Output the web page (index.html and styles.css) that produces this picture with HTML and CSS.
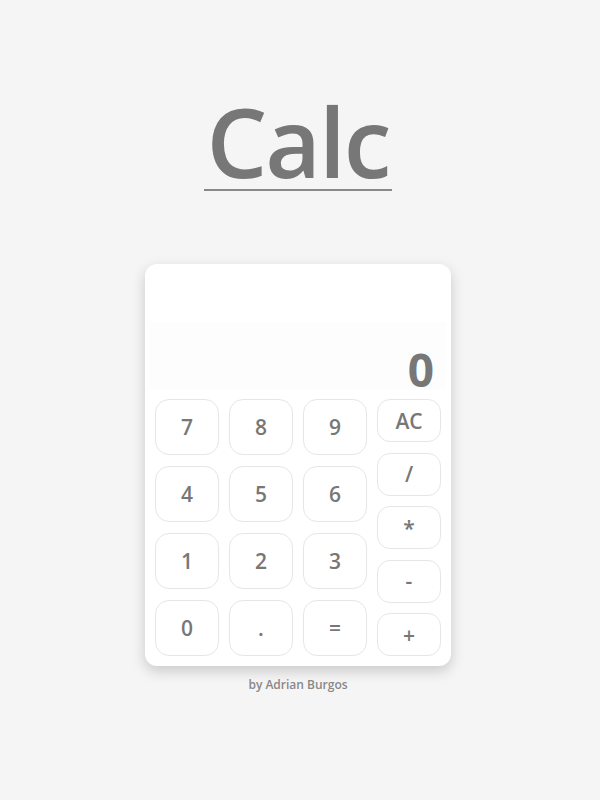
FILE: index.html
```html
<!DOCTYPE html>
<html lang="en">
<head>
<meta charset="utf-8">
<title>Calc</title>
<link rel="stylesheet" href="styles.css">
</head>
<body>
<main class="page">
  <h1 class="title">Calc</h1>
  <section class="calc">
    <div class="display"><div class="screen"><span class="value">0</span></div></div>
    <div class="pad">
      <div class="digits">
        <button class="key">7</button>
        <button class="key">8</button>
        <button class="key">9</button>
        <button class="key">4</button>
        <button class="key">5</button>
        <button class="key">6</button>
        <button class="key">1</button>
        <button class="key">2</button>
        <button class="key">3</button>
        <button class="key">0</button>
        <button class="key">.</button>
        <button class="key">=</button>
      </div>
      <div class="ops">
        <button class="key op">AC</button>
        <button class="key op">/</button>
        <button class="key op">*</button>
        <button class="key op">-</button>
        <button class="key op">+</button>
      </div>
    </div>
  </section>
  <p class="credit">by Adrian Burgos</p>
</main>
</body>
</html>
```

FILE: styles.css
```css
html, body {
  margin: 0;
  padding: 0;
  background: #f5f5f5;
}
body {
  font-family: "Open Sans", "Noto Sans", sans-serif;
  color: #777;
}
.page {
  display: flex;
  flex-direction: column;
  align-items: center;
  padding-right: 4px;
}
.title {
  margin: 93px 0 0;
  font-size: 96px;
  line-height: 96px;
  font-weight: 600;
  color: #777;
  border-bottom: 2px solid #888;
  padding: 0 3px;
  letter-spacing: -2px;
}
.calc {
  margin-top: 73px;
  width: 306px;
  box-sizing: border-box;
  padding: 10px;
  background: #fff;
  border-radius: 12px;
  box-shadow: 0 5px 14px rgba(0, 0, 0, 0.18);
}
.display {
  height: 115px;
  display: flex;
  flex-direction: column;
  justify-content: flex-end;
  margin-bottom: 10px;
}
.screen {
  height: 67px;
  margin: 0 -5px 0 -5px;
  padding-right: 12px;
  background: #fdfdfd;
  display: flex;
  justify-content: flex-end;
  align-items: flex-end;
  font-size: 46px;
  font-weight: 700;
  line-height: 46px;
  color: #777;
}
.value {
  margin-bottom: -3px;
}
.pad {
  display: flex;
  gap: 10px;
}
.digits {
  display: grid;
  grid-template-columns: repeat(3, 64px);
  grid-auto-rows: 56px;
  column-gap: 10px;
  row-gap: 11px;
}
.ops {
  display: flex;
  flex-direction: column;
  justify-content: space-between;
  width: 64px;
  height: 257px;
}
.key {
  font-family: "Open Sans", "Noto Sans", sans-serif;
  font-size: 21px;
  font-weight: 600;
  color: #777;
  background: #fff;
  border: 1px solid #e6e6e6;
  border-radius: 14px;
  padding: 0;
  margin: 0;
}
.op {
  height: 43px;
  border-radius: 13px;
}
.credit {
  margin: 10px 0 0;
  font-size: 12px;
  font-weight: 600;
  color: #888;
}
```
